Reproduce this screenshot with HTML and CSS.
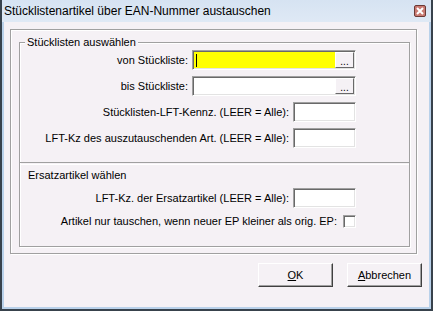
FILE: index.html
```html
<!DOCTYPE html>
<html lang="de">
<head>
    <meta charset="UTF-8">
    <title>Stücklistenartikel über EAN-Nummer austauschen</title>
    <link rel="stylesheet" href="styles.css">
</head>
<body>
    <div class="window">
        <div class="titlebar">
            <span class="title">Stücklistenartikel über EAN-Nummer austauschen</span>
            <span class="close">
                <svg width="8" height="8" viewBox="0 0 8 8"><path d="M1 1L7 7M7 1L1 7" stroke="#fff" stroke-width="2"/></svg>
            </span>
        </div>
        <div class="client">
            <div class="frame">
                <div class="group">
                    <div class="legend">Stücklisten auswählen</div>
                    <div class="row first">
                        <label>von Stückliste:</label>
                        <div class="field wide yellow"><span class="caret"></span><span class="dots">...</span></div>
                    </div>
                    <div class="row">
                        <label>bis Stückliste:</label>
                        <div class="field wide"><span class="dots">...</span></div>
                    </div>
                    <div class="row">
                        <label>Stücklisten-LFT-Kennz. (LEER = Alle):</label>
                        <div class="field short"></div>
                    </div>
                    <div class="row">
                        <label>LFT-Kz des auszutauschenden Art. (LEER = Alle):</label>
                        <div class="field short"></div>
                    </div>
                    <div class="separator"></div>
                    <div class="subtitle">Ersatzartikel wählen</div>
                    <div class="row">
                        <label>LFT-Kz. der Ersatzartikel (LEER = Alle):</label>
                        <div class="field short"></div>
                    </div>
                    <div class="row check-row">
                        <label>Artikel nur tauschen, wenn neuer EP kleiner als orig. EP:</label>
                        <div class="checkbox"></div>
                    </div>
                </div>
            </div>
            <div class="buttons">
                <button type="button"><u>O</u>K</button>
                <button type="button"><u>A</u>bbrechen</button>
            </div>
        </div>
    </div>
</body>
</html>
```

FILE: styles.css
```css
body { margin: 0; font-family: "Liberation Sans", Arial, sans-serif; font-size: 11px; }
.window { width: 429px; height: 309px; border: 2px solid #38424c; border-top: 0; background: #b9d1ea; display: flex; flex-direction: column; }
.titlebar { height: 22px; display: flex; align-items: center; justify-content: space-between; padding: 0 5px 0 1px; background: linear-gradient(#d6e3f2, #dfe9f5); }
.title { font-size: 12px; color: #000; padding-left: 1px; }
.close { width: 10px; height: 10px; border: 1px solid #6b3a36; border-radius: 2px; background: #c97a72; display: flex; align-items: center; justify-content: center; }
.client { flex: 1; margin: 0 2px 2px 2px; background: #f5f1f5; padding: 7px 0 0 6px; }
.frame { width: 407px; height: 225px; border: 1px solid #a0a0a0; box-shadow: inset 1px 1px #fff, 1px 1px #fff; padding: 12px 0 0 8px; box-sizing: border-box; }
.group { width: 391px; height: 205px; box-sizing: border-box; border: 1px solid #a0a0a0; box-shadow: inset 1px 1px #fff, 1px 1px #fff; }
.legend { width: fit-content; margin: -7px 0 0 5px; padding: 0 2px; line-height: 13px; background: #f5f1f5; }
.row { display: flex; justify-content: flex-end; align-items: center; gap: 4px; height: 20px; margin-top: 6px; padding-right: 53px; }
.row.first { margin-top: 1px; }
.separator { height: 1px; border-top: 1px solid #a0a0a0; border-bottom: 1px solid #fff; margin-top: 14px; }
.subtitle { line-height: 13px; margin: 4px 0 0 8px; }
.check-row { margin-top: 3px; gap: 6px; }
.field { height: 20px; box-sizing: border-box; background: #fff; border-top: 1px solid #a0a0a0; border-left: 1px solid #a0a0a0; border-bottom: 1px solid #fff; border-right: 1px solid #fff; box-shadow: inset 1px 1px #696969, inset -1px -1px #e3e3e3; display: flex; align-items: stretch; justify-content: flex-end; position: relative; }
.wide { width: 164px; }
.short { width: 63px; }
.yellow { background: linear-gradient(to right, #ffff00 calc(100% - 20px), #fff calc(100% - 20px)); }
.caret { position: absolute; left: 3px; top: 3px; width: 1px; height: 13px; background: #000; }
.dots { width: 19px; margin: 1px 1px 1px 0; box-sizing: border-box; background: #f5f1f5; border-top: 1px solid #fff; border-left: 1px solid #fff; border-right: 1px solid #696969; border-bottom: 1px solid #696969; font-size: 10px; line-height: 18px; text-align: center; }
.checkbox { width: 13px; height: 13px; box-sizing: border-box; background: #fff; border-top: 1px solid #a0a0a0; border-left: 1px solid #a0a0a0; border-bottom: 1px solid #fff; border-right: 1px solid #fff; box-shadow: inset 1px 1px #696969, inset -1px -1px #e3e3e3; }
.buttons { display: flex; justify-content: flex-end; gap: 14px; padding: 9px 7px 0 0; }
button { width: 75px; height: 24px; font-family: inherit; font-size: 11px; color: #000; background: #f5f1f5; border: 1px solid; border-color: #fff #404040 #404040 #fff; box-shadow: inset -1px -1px #a0a0a0; padding: 0; }
```
